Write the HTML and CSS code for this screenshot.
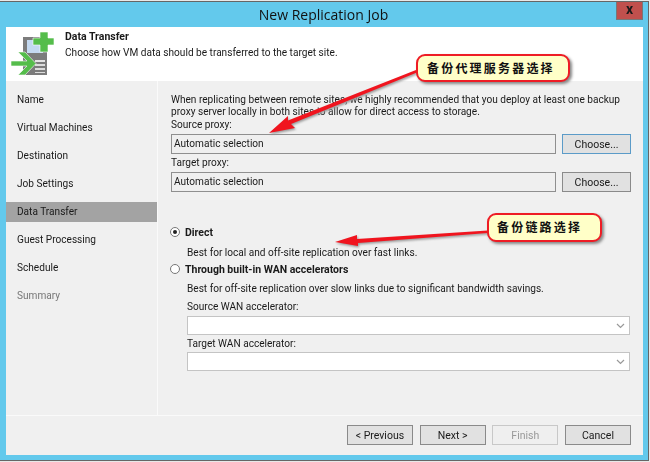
FILE: index.html
```html
<!DOCTYPE html>
<html lang="en">
<head>
  <meta charset="UTF-8">
  <title>New Replication Job</title>
  <link rel="stylesheet" href="styles.css">
</head>
<body>
  <div class="window">
    <div class="titlebar">
      <span class="title">New Replication Job</span>
      <span class="close">x</span>
    </div>
    <div class="client">
      <div class="header">
        <svg class="logo" width="46" height="46" viewBox="0 0 46 46">
          <rect x="12" y="6" width="24" height="38" fill="#7c7c7c"/>
          <rect x="16" y="9" width="16" height="13" fill="#c4d9f1"/>
          <rect x="24" y="29" width="10" height="2" fill="#e4e4e4"/>
          <rect x="24" y="33" width="10" height="2" fill="#dcdcdc"/>
          <rect x="24" y="37" width="10" height="2" fill="#dcdcdc"/>
          <rect x="24" y="41" width="10" height="1" fill="#dcdcdc"/>
          <path d="M29 1h8v6h6v7h-6v7h-8v-7h-7v-7h7z" fill="#55bd4b" stroke="#fff" stroke-width="0.600"/>
          <path d="M0 30h16l-9-9h7l11 11.500L14 44H7l9-9H0z" fill="#55bd4b" stroke="#fff" stroke-width="0.600"/>
        </svg>
        <div class="header-text">
          <div class="header-title">Data Transfer</div>
          <div>Choose how VM data should be transferred to the target site.</div>
        </div>
      </div>
      <div class="middle">
        <nav class="steps">
          <div class="step">Name</div>
          <div class="step">Virtual Machines</div>
          <div class="step">Destination</div>
          <div class="step">Job Settings</div>
          <div class="step current">Data Transfer</div>
          <div class="step">Guest Processing</div>
          <div class="step">Schedule</div>
          <div class="step muted">Summary</div>
        </nav>
        <main class="panel">
          <p class="intro">When replicating between remote sites, we highly recommended that you deploy at least one backup proxy server locally in both sites to allow for direct access to storage.</p>
          <div class="label">Source proxy:</div>
          <div class="proxy-row">
            <div class="field">Automatic selection</div>
            <button class="btn choose">Choose...</button>
          </div>
          <div class="label second">Target proxy:</div>
          <div class="proxy-row">
            <div class="field">Automatic selection</div>
            <button class="btn">Choose...</button>
          </div>
          <div class="radio-row first-radio">
            <span class="radio checked"></span><b>Direct</b>
          </div>
          <div class="hint">Best for local and off-site replication over fast links.</div>
          <div class="radio-row">
            <span class="radio"></span><b>Through built-in WAN accelerators</b>
          </div>
          <div class="hint gap">Best for off-site replication over slow links due to significant bandwidth savings.</div>
          <div class="wan-label">Source WAN accelerator:</div>
          <div class="combo"><svg width="9" height="6" viewBox="0 0 9 6"><path d="M1 1l3.500 3.500L8 1" fill="none" stroke="#999" stroke-width="1.200"/></svg></div>
          <div class="wan-label next">Target WAN accelerator:</div>
          <div class="combo"><svg width="9" height="6" viewBox="0 0 9 6"><path d="M1 1l3.500 3.500L8 1" fill="none" stroke="#999" stroke-width="1.200"/></svg></div>
        </main>
      </div>
      <div class="footer">
        <button class="btn nav">&lt; Previous</button>
        <button class="btn nav">Next &gt;</button>
        <button class="btn nav disabled">Finish</button>
        <button class="btn nav">Cancel</button>
      </div>
    </div>
  </div>

  <!-- annotations pasted on top of the screenshot -->
  <svg class="arrows" width="650" height="462" viewBox="0 0 650 462">
    <path class="arrow-shadow" d="M269 133L288 116L288 120.500L416 70L417 72.500L291 124L295 128z" transform="translate(1 1.500)"/>
    <path class="arrow" d="M269 133L288 116L288 120.500L416 70L417 72.500L291 124L295 128z"/>
    <path class="arrow-shadow" d="M335 242L357 235L357 239L488 230.500L488 233L358 243L358 246z" transform="translate(1 1.500)"/>
    <path class="arrow" d="M335 242L357 235L357 239L488 230.500L488 233L358 243L358 246z"/>
  </svg>
  <div class="callout proxy-callout">备份代理服务器选择</div>
  <div class="callout link-callout">备份链路选择</div>
</body>
</html>
```

FILE: styles.css
```css
html, body {
  margin: 0;
  padding: 0;
  height: 100%;
  overflow: hidden;
  background: #e8e8e8;
}

body {
  position: relative;
  font-family: Roboto, "Open Sans", sans-serif;
  font-size: 10.100px;
  color: #1a1a1a;
}

b {
  font-size: 10.500px;
}

.window {
  box-sizing: border-box;
  width: 649px;
  height: 460px;
  margin-top: 1px;
  background: #63c9ec;
  border: 1px solid #666;
  border-left: none;
  padding: 0 5px 5px 6px;
  display: flex;
  flex-direction: column;
  filter: blur(0.3px);
}

.titlebar {
  height: 25px;
  position: relative;
  display: flex;
  align-items: center;
  justify-content: center;
}

.title {
  font-family: "Open Sans", sans-serif;
  font-size: 14px;
  color: #111;
  margin: -1px 2px 0 0;
}

.close {
  position: absolute;
  right: 0;
  top: 0;
  width: 27px;
  height: 18px;
  background: #c0504d;
  border: 1px solid #777;
  border-top: none;
  box-sizing: border-box;
  text-align: center;
  font-size: 14px;
  font-weight: bold;
  line-height: 14px;
}

.client {
  flex: 1;
  display: flex;
  flex-direction: column;
  background: #f0f0f0;
}

.header {
  height: 54px;
  background: #fff;
  display: flex;
  flex-shrink: 0;
}

.logo {
  margin: 4px 0 0 5px;
}

.header-text {
  margin-left: 8px;
  padding-top: 2px;
  line-height: 15.500px;
}

.header-title {
  font-size: 10.500px;
  font-weight: bold;
}

.middle {
  flex: 1;
  display: flex;
}

.steps {
  box-sizing: border-box;
  width: 152px;
  padding-top: 9px;
  background: #f0f0f0;
  border-right: 1px solid #fafafa;
}

.step {
  height: 20px;
  line-height: 20px;
  margin-bottom: 8px;
  padding-left: 11px;
}

.step.current {
  background: #a3a3a3;
}

.step.muted {
  color: #777;
}

.panel {
  flex: 1;
  padding: 13px 12px 0 13px;
}

.intro {
  margin: 0;
  line-height: 12px;
}

.label {
  line-height: 13px;
}

.label.second {
  margin-top: 2px;
}

.proxy-row {
  display: flex;
  gap: 6px;
  margin-top: 3px;
}

.field {
  box-sizing: border-box;
  width: 385px;
  height: 20px;
  border: 1px solid #8f8f8f;
  background: #efefef;
  line-height: 18px;
  padding-left: 2px;
}

.btn {
  box-sizing: border-box;
  width: 69px;
  height: 20px;
  padding: 0;
  border: 1px solid #8a8a8a;
  background: #e1e1e1;
  font: inherit;
  font-size: 10.500px;
  color: inherit;
}

.btn.choose {
  border-color: #5b9bc8;
}

.radio-row {
  display: flex;
  align-items: center;
  height: 16px;
  margin-top: 2px;
  margin-left: -1px;
}

.first-radio {
  margin-top: 32px;
}

.radio {
  box-sizing: border-box;
  width: 10px;
  height: 10px;
  border: 1px solid #777;
  border-radius: 50%;
  background: #fff;
  margin-right: 5px;
  position: relative;
}

.radio.checked::after {
  content: "";
  position: absolute;
  left: 2px;
  top: 2px;
  width: 4px;
  height: 4px;
  border-radius: 50%;
  background: #222;
}

.hint {
  margin: 6px 0 0 16px;
  line-height: 13px;
}

.hint.gap {
  margin-top: 5px;
}

.wan-label {
  margin: 5px 0 0 16px;
  line-height: 13px;
}

.wan-label.next {
  margin-top: 2px;
}

.combo {
  box-sizing: border-box;
  margin: 3px 0 0 16px;
  width: 443px;
  height: 19px;
  background: #fff;
  border: 1px solid #c4c4c4;
  display: flex;
  align-items: center;
  justify-content: flex-end;
  padding-right: 4px;
}

.wan-label.next + .combo {
  margin-top: 2px;
}

.footer {
  height: 40px;
  flex-shrink: 0;
  box-sizing: border-box;
  border-top: 1px solid #fafafa;
  padding: 9px 12px 0 0;
  display: flex;
  justify-content: flex-end;
  gap: 6.700px;
}

.btn.nav {
  width: 66px;
}

.btn.nav.disabled {
  color: #999;
  background: #efefef;
  border-color: #c8c8c8;
}

.arrows {
  position: absolute;
  left: 0;
  top: 0;
}

.arrow {
  fill: #f0141e;
}

.arrow-shadow {
  fill: #999;
  filter: blur(0.8px);
}

.callout {
  position: absolute;
  box-sizing: border-box;
  height: 28px;
  background: #ffffc8;
  border: 2px solid #ee1c25;
  border-radius: 9px;
  box-shadow: 2px 2px 3px #888;
  font-family: "Noto Sans CJK SC", sans-serif;
  font-size: 12px;
  font-weight: bold;
  line-height: 24px;
  letter-spacing: 2.200px;
  color: #111;
  white-space: nowrap;
}

.proxy-callout {
  left: 416px;
  top: 54px;
  width: 154px;
  padding-left: 9px;
}

.link-callout {
  left: 487px;
  top: 213px;
  width: 115px;
  height: 29px;
  padding-left: 8px;
}
```
